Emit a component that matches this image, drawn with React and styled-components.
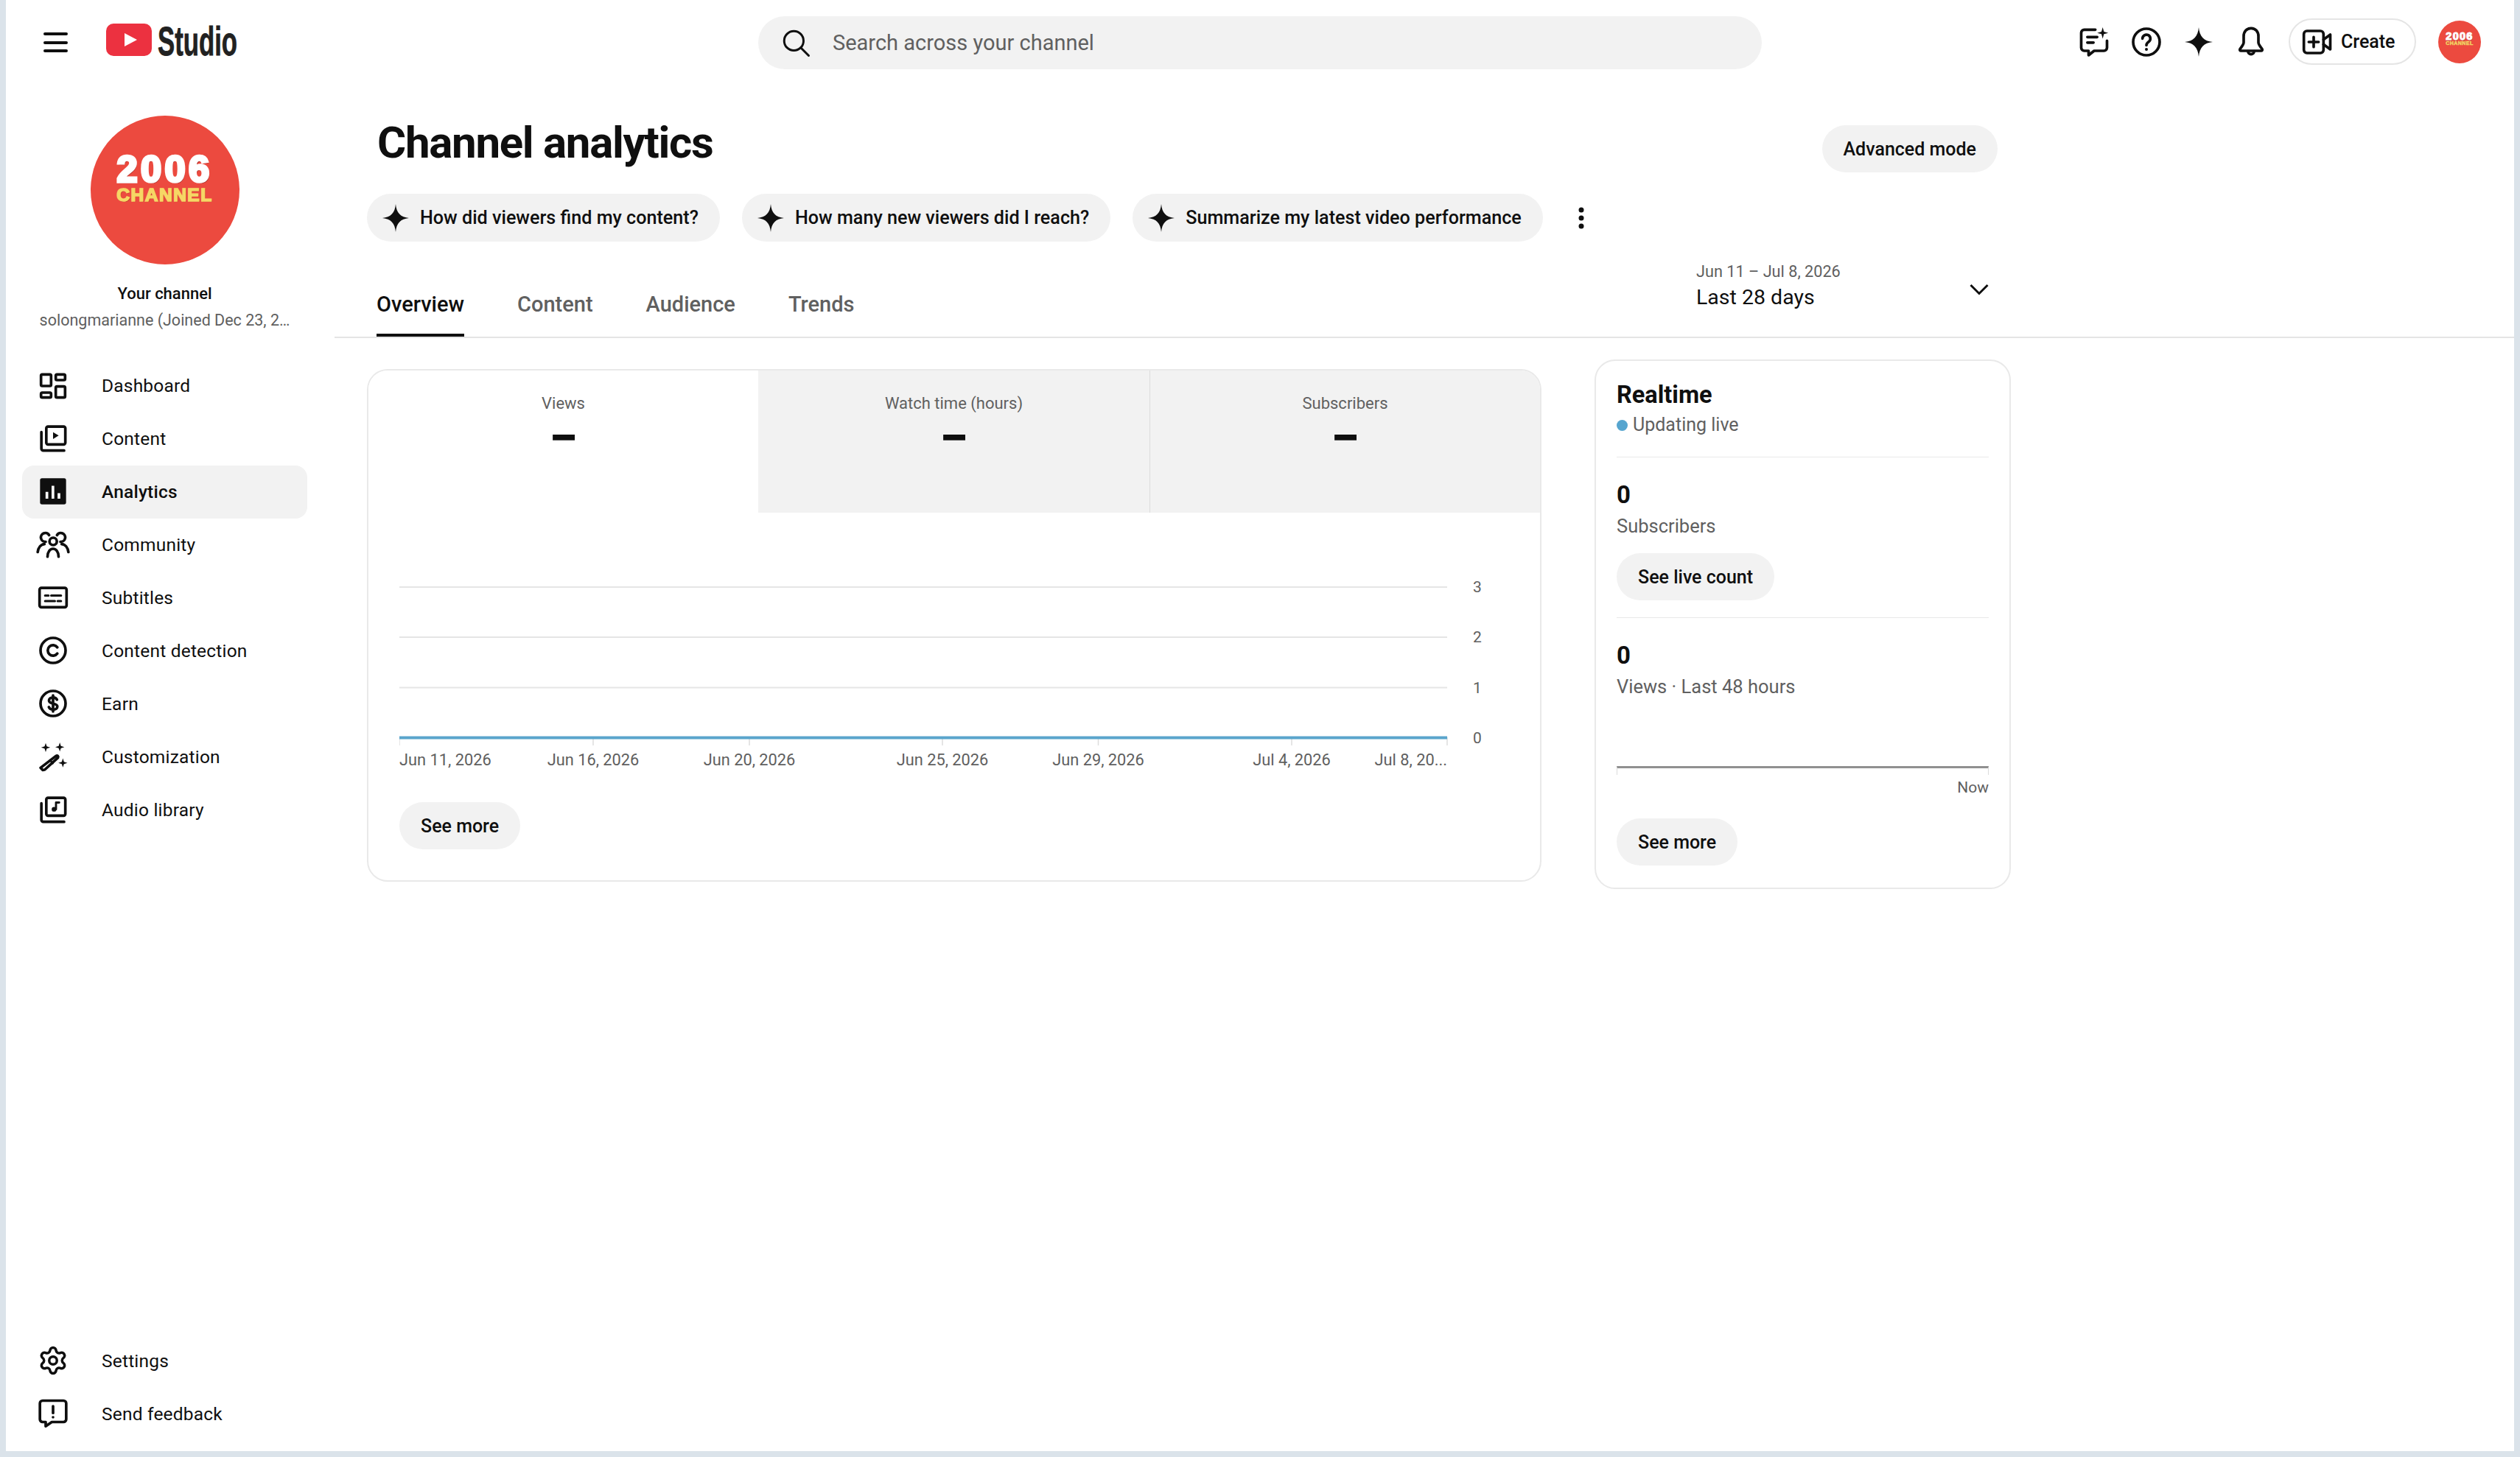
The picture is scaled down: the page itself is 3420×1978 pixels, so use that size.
import React from "react";
import styled, { createGlobalStyle } from "styled-components";
import { Settings as Gear } from "lucide-react";

const GlobalStyle = createGlobalStyle`
  html, body {
    margin: 0;
    padding: 0;
    background: #dbe3ea;
    font-family: Roboto, "Liberation Sans", sans-serif;
    color: #0f0f0f;
  }
  * { box-sizing: border-box; }
`;

const STAR = "M12 0C12.7 7.6 16.4 11.3 24 12C16.4 12.7 12.7 16.4 12 24C11.3 16.4 7.6 12.7 0 12C7.6 11.3 11.3 7.6 12 0Z";

const Icon = ({ children, size = 40, fill = "none" }) => (
  <svg
    width={size}
    height={size}
    viewBox="0 0 24 24"
    fill={fill}
    stroke="currentColor"
    strokeWidth="2.2"
    strokeLinecap="round"
    strokeLinejoin="round"
    style={{ overflow: "visible", display: "block" }}
  >
    {children}
  </svg>
);

const Star = ({ size = 38 }) => (
  <svg width={size} height={size + 2} viewBox="0 0 24 24" preserveAspectRatio="none" style={{ display: "block", flex: "none" }}>
    <path d={STAR} fill="#0f0f0f" />
  </svg>
);

const NAV_ICONS = {
  dashboard: (
    <Icon>
      <rect x="2.2" y="3.2" width="8.2" height="9.4" rx="1" />
      <rect x="2.2" y="18" width="8.2" height="4" rx="1" />
      <rect x="14.2" y="3.2" width="7.6" height="4.6" rx="1" />
      <rect x="14.2" y="13" width="7.6" height="9" rx="1" />
    </Icon>
  ),
  content: (
    <Icon>
      <rect x="6.5" y="2.5" width="15.5" height="14.5" rx="1.4" />
      <path d="M2.5 7v13.4c0 .9.7 1.6 1.6 1.6H21" />
      <path d="M12 7l4.6 2.8L12 12.6z" fill="currentColor" stroke="none" />
    </Icon>
  ),
  analytics: (
    <Icon>
      <rect x="1.4" y="1.4" width="21.2" height="21.2" rx="1.6" fill="currentColor" stroke="none" />
      <path d="M7 12.5v5.5M11.900 7.500V18M16.800 13.500V18" stroke="#fff" strokeWidth="2.2" strokeLinecap="butt" />
    </Icon>
  ),
  community: (
    <Icon>
      <circle cx="12.100" cy="9.600" r="3" />
      <path d="M7.500 22c0-3.800 2-6.400 4.500-6.400s4.500 2.600 4.500 6.400" />
      <path d="M8.800 4.500A3.600 3.600 0 1 0 6 9.900" />
      <path d="M15.200 4.500A3.600 3.600 0 1 1 18 9.900" />
      <path d="M-.500 18.300c.500-3.500 2.500-6.300 5.500-6.500M24.500 18.300c-.500-3.500-2.500-6.300-5.500-6.500" />
    </Icon>
  ),
  subtitles: (
    <Icon>
      <rect x="1" y="4.300" width="22" height="15.700" rx="1.500" />
      <path d="M5.500 10.500h2.800M10.500 10.500h8M5.500 15h8M15.700 15h2.800" strokeWidth="1.800" />
    </Icon>
  ),
  copyright: (
    <Icon>
      <circle cx="12" cy="12" r="10.200" />
      <path d="M15.500 9.500a4.300 4.300 0 1 0 0 5" />
    </Icon>
  ),
  earn: (
    <Icon>
      <circle cx="12" cy="12" r="10.200" />
      <path d="M15.200 8.900c-.6-1.200-1.800-1.800-3.200-1.800-1.900 0-3.300 1-3.300 2.500 0 3.500 6.800 1.600 6.800 4.900 0 1.500-1.500 2.500-3.500 2.500-1.500 0-2.800-.7-3.400-2M12 5.400v13.200" />
    </Icon>
  ),
  customization: (
    <Icon>
      <path d="M3.500 23L1.800 21.200 14.500 11.500c1-.7 2.100.5 1.500 1.500L5.200 22.800z" />
      <path d="M9.500 15l2.300 2.600" strokeWidth="1.500" />
      <path d="M6 1l.9 2.800L9.700 4.700 6.900 5.600 6 8.400 5.100 5.600 2.300 4.700l2.800-.9z" fill="currentColor" stroke="none" />
      <path d="M17.500 .6l.9 2.800 2.800.9-2.800.9-.9 2.800-.9-2.800-2.800-.9 2.800-.9z" fill="currentColor" stroke="none" />
      <path d="M20 13.500l.9 2.800 2.800.9-2.800.9-.9 2.800-.9-2.800-2.800-.9 2.800-.9z" fill="currentColor" stroke="none" />
    </Icon>
  ),
  audio: (
    <Icon>
      <rect x="6.500" y="2.500" width="15.500" height="14.500" rx="1.400" />
      <path d="M2.500 7v13.400c0 .9.700 1.600 1.600 1.600H21" />
      <circle cx="12.800" cy="11.800" r="1.900" fill="currentColor" stroke="none" />
      <path d="M14.400 11.800V6.300h2.600" strokeWidth="1.700" />
    </Icon>
  ),
  settings: <Gear size={42} strokeWidth={2} />,
  feedback: (
    <Icon>
      <path d="M3.500 1.500h17a2.200 2.200 0 0 1 2.200 2.200v13a2.200 2.200 0 0 1-2.200 2.200H11l-5 3.400v-3.400H3.500a2.200 2.200 0 0 1-2.200-2.200v-13a2.200 2.200 0 0 1 2.200-2.200z" />
      <path d="M12 6v5.500" />
      <circle cx="12" cy="15" r="1.100" fill="currentColor" stroke="none" />
    </Icon>
  ),
};

const MAIN_NAV = [
  ["dashboard", "Dashboard"],
  ["content", "Content"],
  ["analytics", "Analytics"],
  ["community", "Community"],
  ["subtitles", "Subtitles"],
  ["copyright", "Content detection"],
  ["earn", "Earn"],
  ["customization", "Customization"],
  ["audio", "Audio library"],
];

const Avatar = ({ size }) => (
  <AvatarCircle $size={size}>
    <AvatarYear $size={size}>2006</AvatarYear>
    <AvatarWord $size={size}>CHANNEL</AvatarWord>
  </AvatarCircle>
);

const Chart = () => {
  const grid = [[17, "3"], [85, "2"], [153.5, "1"]];
  const ticks = [
    [263, "Jun 16, 2026"],
    [475, "Jun 20, 2026"],
    [737, "Jun 25, 2026"],
    [948.5, "Jun 29, 2026"],
    [1211, "Jul 4, 2026"],
  ];
  return (
    <ChartSvg width="1480" height="270" viewBox="0 0 1480 270">
      {grid.map(([y, label]) => (
        <g key={label}>
          <line x1="0" x2="1422" y1={y} y2={y} stroke="#e5e5e5" strokeWidth="2" />
          <text x="1463" y={y + 7} textAnchor="middle" fill="#606060" fontSize="21">{label}</text>
        </g>
      ))}
      {[0, 263, 475, 737, 948.5, 1211, 1422].map((x) => (
        <line key={x} x1={x} x2={x} y1="221" y2="232" stroke="#dcdcdc" strokeWidth="1.500" />
      ))}
      <line x1="0" x2="1422" y1="221.500" y2="221.500" stroke="#5aa5cc" strokeWidth="4" />
      <text x="1463" y="228.500" textAnchor="middle" fill="#606060" fontSize="21">0</text>
      <text x="0" y="259" fill="#606060" fontSize="21.800">Jun 11, 2026</text>
      {ticks.map(([x, label]) => (
        <text key={label} x={x} y="259" textAnchor="middle" fill="#606060" fontSize="21.800">{label}</text>
      ))}
      <text x="1422" y="259" textAnchor="end" fill="#606060" fontSize="21.800">Jul 8, 20...</text>
    </ChartSvg>
  );
};

export default function App() {
  return (
    <>
      <GlobalStyle />
      <Frame>
        <Header>
          <HeaderLeft>
            <Burger>
              <span />
              <span />
              <span />
            </Burger>
            <svg width="62" height="44" viewBox="0 0 62 44">
              <rect width="62" height="44" rx="10" fill="#ec3140" />
              <path d="M25 13l17 9-17 9z" fill="#fff" />
            </svg>
            <LogoWord>Studio</LogoWord>
          </HeaderLeft>
          <SearchBar>
            <svg width="42" height="42" viewBox="0 0 24 24" fill="none" stroke="#0f0f0f" strokeWidth="1.700" strokeLinecap="round">
              <circle cx="10.500" cy="10.500" r="7.500" />
              <path d="M16 16l6 6" />
            </svg>
            <SearchText>Search across your channel</SearchText>
          </SearchBar>
          <HeaderRight>
            <HeaderIcon>
              <Icon>
                <path d="M13 2H4a2.500 2.500 0 0 0-2.500 2.500v12.200A2.500 2.500 0 0 0 4 19.200h3.500v3.600l4.500-3.600h8a2.500 2.500 0 0 0 2.500-2.500V11" />
                <path d="M6.500 8h8M6.500 12.500h5" />
                <path d="M19 0l1 3.600 3.500 1-3.500 1-1 3.700-1-3.700-3.500-1 3.500-1z" fill="currentColor" stroke="none" />
              </Icon>
            </HeaderIcon>
            <HeaderIcon>
              <Icon>
                <circle cx="12" cy="12" r="10.800" />
                <path d="M8.800 9.200a3.200 3.200 0 1 1 5 2.700c-1.100.8-1.800 1.400-1.800 2.800" />
                <circle cx="12" cy="18" r="1.200" fill="currentColor" stroke="none" />
              </Icon>
            </HeaderIcon>
            <HeaderIcon>
              <Star size={38} />
            </HeaderIcon>
            <HeaderIcon>
              <Icon>
                <path d="M12 .8c-3.800 0-6 3-6 6.500v5.200c0 1.500-1.300 3-3 5.300-.4.700 0 1.400.8 1.400h16.400c.8 0 1.200-.7.800-1.400-1.700-2.300-3-3.800-3-5.300V7.300c0-3.500-2.200-6.500-6-6.500z" />
                <path d="M9.500 19.500a2.500 2.500 0 0 0 5 0" />
              </Icon>
            </HeaderIcon>
            <CreateButton>
              <Icon>
                <rect x="1" y="3" width="16" height="18" rx="2.500" />
                <path d="M9 8v8M5 12h8" />
                <path d="M17 10l5.500-4v12L17 14" />
              </Icon>
              Create
            </CreateButton>
            <Avatar size={58} />
          </HeaderRight>
        </Header>
        <Body>
          <Sidebar>
            <Profile>
              <Avatar size={202} />
              <ChannelLabel>Your channel</ChannelLabel>
              <ChannelName>solongmarianne (Joined Dec 23, 2…</ChannelName>
            </Profile>
            <Nav>
              {MAIN_NAV.map(([key, label]) => (
                <NavRow key={key} $active={key === "analytics"}>
                  <NavIcon>{NAV_ICONS[key]}</NavIcon>
                  {label}
                </NavRow>
              ))}
            </Nav>
            <BottomNav>
              <NavRow>
                <NavIcon>{NAV_ICONS.settings}</NavIcon>
                Settings
              </NavRow>
              <NavRow>
                <NavIcon>{NAV_ICONS.feedback}</NavIcon>
                Send feedback
              </NavRow>
            </BottomNav>
          </Sidebar>
          <Main>
            <TitleRow>
              <Title>Channel analytics</Title>
              <PillButton $top={12}>Advanced mode</PillButton>
            </TitleRow>
            <ChipRow>
              <Chip>
                <Star size={36} />
                How did viewers find my content?
              </Chip>
              <Chip>
                <Star size={36} />
                How many new viewers did I reach?
              </Chip>
              <Chip>
                <Star size={36} />
                Summarize my latest video performance
              </Chip>
              <Kebab width="8" height="30" viewBox="0 0 8 30">
                <circle cx="4" cy="4" r="3.500" />
                <circle cx="4" cy="15" r="3.500" />
                <circle cx="4" cy="26" r="3.500" />
              </Kebab>
            </ChipRow>
            <TabRow>
              <Tabs>
                <Tab $active>Overview</Tab>
                <Tab>Content</Tab>
                <Tab>Audience</Tab>
                <Tab>Trends</Tab>
              </Tabs>
              <DatePicker>
                <div>
                  <DateRange>Jun 11 – Jul 8, 2026</DateRange>
                  <DateLabel>Last 28 days</DateLabel>
                </div>
                <Chevron width="26" height="16" viewBox="0 0 26 16" fill="none" stroke="#0f0f0f" strokeWidth="3">
                  <path d="M1.500 2l11.500 11.500L24.500 2" />
                </Chevron>
              </DatePicker>
            </TabRow>
            <Content>
              <OverviewCard>
                <Metrics>
                  <Metric $active>
                    <MetricLabel>Views</MetricLabel>
                    <MetricValue>–</MetricValue>
                  </Metric>
                  <Metric>
                    <MetricLabel>Watch time (hours)</MetricLabel>
                    <MetricValue>–</MetricValue>
                  </Metric>
                  <Metric $last>
                    <MetricLabel>Subscribers</MetricLabel>
                    <MetricValue>–</MetricValue>
                  </Metric>
                </Metrics>
                <ChartArea>
                  <Chart />
                  <PillButton $top={39}>See more</PillButton>
                </ChartArea>
              </OverviewCard>
              <RealtimeCard>
                <RealtimeHead>
                  <RealtimeTitle>Realtime</RealtimeTitle>
                  <LiveRow>
                    <LiveDot />
                    Updating live
                  </LiveRow>
                </RealtimeHead>
                <Section>
                  <BigNumber>0</BigNumber>
                  <SubLabel>Subscribers</SubLabel>
                  <PillButton $top={22}>See live count</PillButton>
                </Section>
                <Section $last>
                  <BigNumber>0</BigNumber>
                  <SubLabel>Views · Last 48 hours</SubLabel>
                  <MiniAxis />
                  <NowLabel>Now</NowLabel>
                  <PillButton $top={29}>See more</PillButton>
                </Section>
              </RealtimeCard>
            </Content>
          </Main>
        </Body>
      </Frame>
    </>
  );
}

const Frame = styled.div`
  width: 3404px;
  height: 1970px;
  margin: 0 8px 8px;
  background: #fff;
  display: flex;
  flex-direction: column;
  overflow: hidden;
`;

const Header = styled.header`
  height: 115px;
  display: flex;
  flex: none;
`;

const HeaderLeft = styled.div`
  width: 1021px;
  display: flex;
  align-items: flex-start;
  padding: 32px 0 0 51px;
`;

const Burger = styled.div`
  width: 33px;
  margin: 12px 52px 0 0;
  display: flex;
  flex-direction: column;
  gap: 6px;
  span {
    height: 4px;
    border-radius: 2px;
    background: #0f0f0f;
    display: block;
    &:nth-child(n) { margin-bottom: 1.500px; }
  }
`;

const LogoWord = styled.span`
  font-family: "Liberation Sans Narrow", "Liberation Sans", sans-serif;
  font-weight: 700;
  font-size: 56px;
  line-height: 48px;
  color: #212121;
  margin-left: 8px;
  -webkit-text-stroke: 0.800px #212121;
  transform: scaleX(0.62);
  transform-origin: left center;
`;

const SearchBar = styled.div`
  width: 1362px;
  height: 72px;
  margin-top: 22px;
  border-radius: 36px;
  background: #f2f2f2;
  display: flex;
  align-items: center;
  padding-left: 30px;
  gap: 29px;
`;

const SearchText = styled.span`
  font-size: 29px;
  color: #606060;
`;

const HeaderRight = styled.div`
  flex: 1;
  display: flex;
  justify-content: flex-end;
  align-items: flex-start;
  padding-right: 45px;
`;

const HeaderIcon = styled.div`
  width: 40px;
  height: 40px;
  margin: 37px 31px 0 0;
  display: flex;
  justify-content: center;
  color: #0f0f0f;
`;

const CreateButton = styled.div`
  width: 173px;
  height: 63px;
  margin: 25px 30px 0 0;
  border: 2px solid #e5e5e5;
  border-radius: 32px;
  display: flex;
  align-items: center;
  padding-left: 17px;
  gap: 12px;
  font-size: 25px;
  font-weight: 500;
`;

const AvatarCircle = styled.div`
  width: ${(p) => p.$size}px;
  height: ${(p) => p.$size}px;
  margin-top: ${(p) => (p.$size < 100 ? "28px" : "0")};
  border-radius: 50%;
  background: #ec4a3f;
  flex: none;
  display: flex;
  flex-direction: column;
  align-items: center;
  padding-top: ${(p) => p.$size * 0.25}px;
  font-family: "Liberation Sans", sans-serif;
  font-weight: 700;
`;

const AvatarYear = styled.span`
  font-size: ${(p) => p.$size * 0.25}px;
  line-height: ${(p) => p.$size * 0.22}px;
  letter-spacing: ${(p) => p.$size * 0.022}px;
  color: #fff;
  -webkit-text-stroke: ${(p) => p.$size * 0.018}px #fff;
  text-shadow: ${(p) => p.$size * 0.008}px ${(p) => p.$size * 0.01}px 0 #a5302a;
`;

const AvatarWord = styled.span`
  font-size: ${(p) => p.$size * 0.122}px;
  line-height: ${(p) => p.$size * 0.13}px;
  margin-top: ${(p) => p.$size * 0.002}px;
  letter-spacing: ${(p) => p.$size * 0.007}px;
  color: #f6d765;
  -webkit-text-stroke: ${(p) => p.$size * 0.008}px #f6d765;
  text-shadow: ${(p) => p.$size * 0.005}px ${(p) => p.$size * 0.006}px 0 #a5302a;
`;

const Body = styled.div`
  flex: 1;
  display: flex;
  min-height: 0;
`;

const Sidebar = styled.aside`
  width: 446px;
  flex: none;
  padding: 42px 0 14px 22px;
  display: flex;
  flex-direction: column;
`;

const Profile = styled.div`
  width: 387px;
  height: 331px;
  display: flex;
  flex-direction: column;
  align-items: center;
`;

const ChannelLabel = styled.div`
  margin-top: 26px;
  font-size: 22px;
  font-weight: 500;
  line-height: 28px;
`;

const ChannelName = styled.div`
  margin-top: 8px;
  font-size: 21.500px;
  line-height: 28px;
  color: #606060;
  white-space: nowrap;
`;

const Nav = styled.nav`
  width: 387px;
  display: flex;
  flex-direction: column;
`;

const BottomNav = styled(Nav)`
  margin-top: auto;
`;

const NavRow = styled.div`
  height: 72px;
  display: flex;
  align-items: center;
  padding: 0 0 2px 20px;
  border-radius: 16px;
  font-size: 24.500px;
  font-weight: ${(p) => (p.$active ? 500 : 400)};
  letter-spacing: 0.200px;
  background: ${(p) => (p.$active ? "#f2f2f2" : "transparent")};
`;

const NavIcon = styled.span`
  width: 44px;
  margin-right: 44px;
  display: flex;
  justify-content: center;
  color: #0f0f0f;
`;

const Main = styled.main`
  flex: 1;
  min-width: 0;
  display: flex;
  flex-direction: column;
`;

const TitleRow = styled.div`
  width: 2257px;
  height: 119px;
  padding: 43px 0 0 58px;
  display: flex;
  justify-content: space-between;
  align-items: flex-start;
`;

const Title = styled.h1`
  margin: 0;
  font-size: 60px;
  line-height: 72px;
  font-weight: 700;
  letter-spacing: -1.300px;
`;

const PillButton = styled.div`
  width: fit-content;
  height: 64px;
  margin-top: ${(p) => p.$top}px;
  padding: 0 29px;
  border-radius: 32px;
  background: #f2f2f2;
  display: flex;
  align-items: center;
  font-size: 25px;
  font-weight: 500;
  white-space: nowrap;
`;

const ChipRow = styled.div`
  height: 65px;
  margin-top: 29px;
  padding-left: 44px;
  display: flex;
  align-items: center;
  gap: 30px;
`;

const Chip = styled.div`
  height: 65px;
  padding: 0 29px 0 21px;
  border-radius: 33px;
  background: #f2f2f2;
  display: flex;
  align-items: center;
  gap: 15px;
  font-size: 25.150px;
  font-weight: 500;
  white-space: nowrap;
`;

const Kebab = styled.svg`
  margin-left: 18px;
  fill: #0f0f0f;
`;

const TabRow = styled.div`
  height: 131px;
  padding: 0 701px 0 57px;
  border-bottom: 2px solid #e5e5e5;
  display: flex;
  justify-content: space-between;
  align-items: flex-end;
`;

const Tabs = styled.div`
  display: flex;
  gap: 72px;
`;

const Tab = styled.div`
  height: 58px;
  line-height: 28px;
  font-size: 29px;
  font-weight: 500;
  color: ${(p) => (p.$active ? "#0f0f0f" : "#606060")};
  border-bottom: 4px solid ${(p) => (p.$active ? "#0f0f0f" : "transparent")};
`;

const DatePicker = styled.div`
  width: 409px;
  align-self: flex-start;
  margin-top: 28px;
  padding-right: 12px;
  display: flex;
  justify-content: space-between;
  align-items: center;
`;

const DateRange = styled.div`
  font-size: 21.700px;
  line-height: 26px;
  color: #606060;
`;

const DateLabel = styled.div`
  margin-top: 4px;
  font-size: 28.500px;
  line-height: 36px;
`;

const Chevron = styled.svg`
  margin-top: 8px;
`;

const Content = styled.div`
  padding: 29px 0 0 44px;
  display: flex;
  align-items: flex-start;
  gap: 72px;
`;

const OverviewCard = styled.section`
  width: 1594px;
  height: 696px;
  margin-top: 13px;
  border: 2px solid #e9e9e9;
  border-radius: 28px;
  overflow: hidden;
`;

const Metrics = styled.div`
  height: 193px;
  display: grid;
  grid-template-columns: 529px 532px 1fr;
`;

const Metric = styled.div`
  padding-top: 31px;
  text-align: center;
  background: ${(p) => (p.$active ? "#fff" : "#f2f2f2")};
  border-right: ${(p) => (p.$active || p.$last ? "none" : "1.500px solid #dcdcdc")};
`;

const MetricLabel = styled.div`
  font-size: 22px;
  line-height: 28px;
  color: #606060;
`;

const MetricValue = styled.div`
  margin-top: 10px;
  font-size: 56px;
  line-height: 44px;
  font-weight: 700;
  color: #0f0f0f;
  -webkit-text-stroke: 1.500px #0f0f0f;
`;

const ChartArea = styled.div`
  padding: 84px 0 0 42px;
`;

const ChartSvg = styled.svg`
  display: block;
  font-family: Roboto, sans-serif;
`;

const RealtimeCard = styled.section`
  width: 565px;
  height: 719px;
  padding: 26px 28px 0;
  border: 2px solid #e9e9e9;
  border-radius: 28px;
`;

const RealtimeHead = styled.div`
  padding-bottom: 28px;
`;

const RealtimeTitle = styled.h2`
  margin: 0;
  font-size: 32.500px;
  line-height: 40px;
  font-weight: 700;
`;

const LiveRow = styled.div`
  margin-top: 6px;
  display: flex;
  align-items: center;
  gap: 7px;
  font-size: 25px;
  line-height: 30px;
  color: #606060;
`;

const LiveDot = styled.span`
  width: 15px;
  height: 15px;
  border-radius: 50%;
  background: #56a5cf;
`;

const Section = styled.div`
  padding: 31px 0 23px;
  border-top: 1.500px solid #e9e9e9;
`;

const BigNumber = styled.div`
  font-size: 33px;
  line-height: 40px;
  font-weight: 700;
`;

const SubLabel = styled.div`
  margin-top: 7px;
  font-size: 25.500px;
  line-height: 30px;
  color: #606060;
  white-space: nowrap;
`;

const MiniAxis = styled.div`
  height: 12px;
  margin-top: 93px;
  border-top: 3px solid #909090;
  border-left: 1px solid #dcdcdc;
  border-right: 1px solid #dcdcdc;
`;

const NowLabel = styled.div`
  margin-top: 4px;
  text-align: right;
  font-size: 21px;
  line-height: 26px;
  color: #606060;
`;
